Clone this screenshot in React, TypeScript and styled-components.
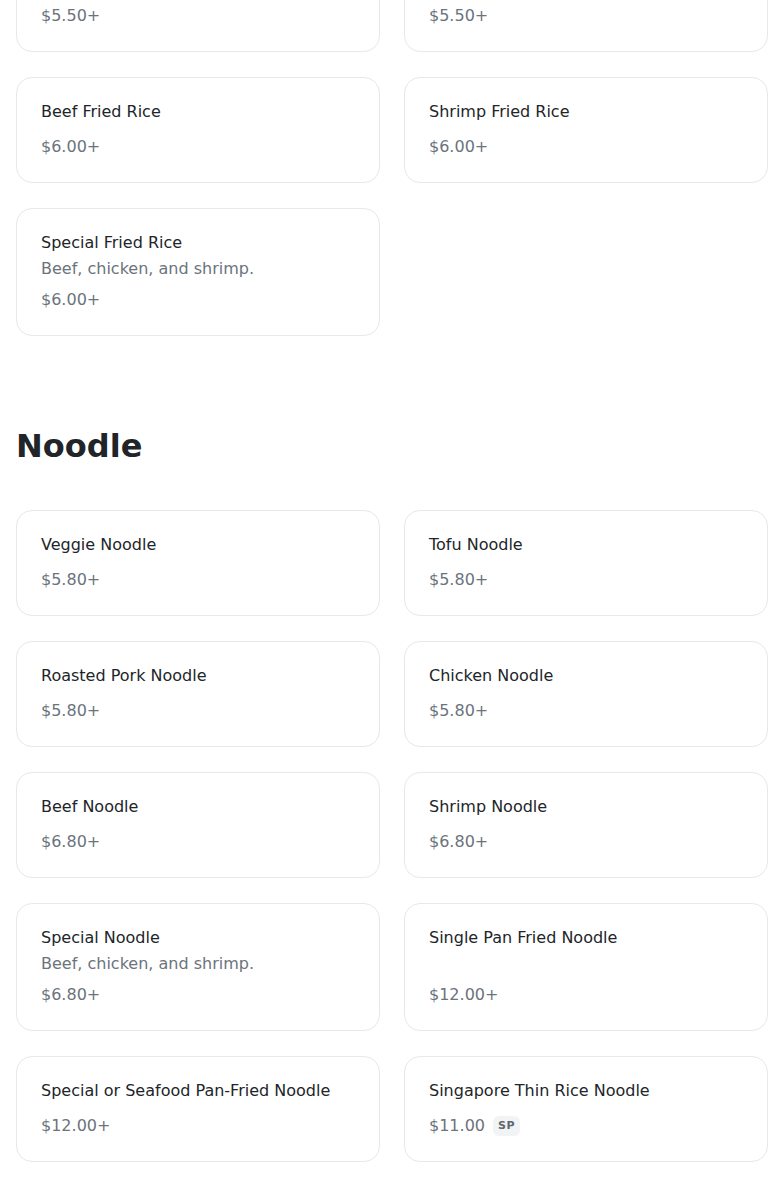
import React from 'react';
import styled, { createGlobalStyle } from 'styled-components';

type Item = {
  name: string;
  price: string;
  description?: string;
  badge?: string;
};

type Section = {
  title?: string;
  items: Item[];
};

const sections: Section[] = [
  {
    items: [
      { name: 'Chicken Fried Rice', price: '$5.50+' },
      { name: 'Roasted Pork Fried Rice', price: '$5.50+' },
      { name: 'Beef Fried Rice', price: '$6.00+' },
      { name: 'Shrimp Fried Rice', price: '$6.00+' },
      {
        name: 'Special Fried Rice',
        description: 'Beef, chicken, and shrimp.',
        price: '$6.00+',
      },
    ],
  },
  {
    title: 'Noodle',
    items: [
      { name: 'Veggie Noodle', price: '$5.80+' },
      { name: 'Tofu Noodle', price: '$5.80+' },
      { name: 'Roasted Pork Noodle', price: '$5.80+' },
      { name: 'Chicken Noodle', price: '$5.80+' },
      { name: 'Beef Noodle', price: '$6.80+' },
      { name: 'Shrimp Noodle', price: '$6.80+' },
      {
        name: 'Special Noodle',
        description: 'Beef, chicken, and shrimp.',
        price: '$6.80+',
      },
      { name: 'Single Pan Fried Noodle', price: '$12.00+' },
      { name: 'Special or Seafood Pan-Fried Noodle', price: '$12.00+' },
      { name: 'Singapore Thin Rice Noodle', price: '$11.00', badge: 'SP' },
    ],
  },
];

export default function App() {
  return (
    <>
      <GlobalStyle />
      <Page>
        {sections.map((section, i) => (
          <MenuSection key={i}>
            {section.title && <SectionTitle>{section.title}</SectionTitle>}
            <Grid>
              {section.items.map((item) => (
                <Card key={item.name}>
                  <Name>{item.name}</Name>
                  {item.description && <Description>{item.description}</Description>}
                  <PriceRow>
                    <Price>{item.price}</Price>
                    {item.badge && <Badge>{item.badge}</Badge>}
                  </PriceRow>
                </Card>
              ))}
            </Grid>
          </MenuSection>
        ))}
      </Page>
    </>
  );
}

const GlobalStyle = createGlobalStyle`
  * {
    box-sizing: border-box;
  }
  html, body {
    margin: 0;
    padding: 0;
    background: #ffffff;
  }
  body {
    font-family: "DejaVu Sans", "Liberation Sans", sans-serif;
    color: #212529;
  }
`;

/* the screenshot is taken part way down the menu */
const Page = styled.main`
  margin-top: -54px;
  padding: 0 16px 60px;
`;

const MenuSection = styled.section`
  & + & {
    margin-top: 90px;
  }
`;

const SectionTitle = styled.h2`
  margin: 0 0 44px;
  font-size: 32px;
  line-height: 40px;
  font-weight: 700;
  color: #212529;
`;

const Grid = styled.div`
  display: grid;
  grid-template-columns: repeat(2, 1fr);
  column-gap: 24px;
  row-gap: 25px;
`;

const Card = styled.div`
  display: flex;
  flex-direction: column;
  min-height: 106px;
  padding: 24px 24px 25px;
  background: #ffffff;
  border: 1px solid #e7e8ea;
  border-radius: 16px;
`;

const Name = styled.div`
  font-size: 16px;
  line-height: 20px;
  color: #212529;
`;

const Description = styled.div`
  margin-top: 6px;
  font-size: 16px;
  line-height: 20px;
  color: #6c737c;
`;

const PriceRow = styled.div`
  display: flex;
  align-items: center;
  margin-top: auto;
  padding-top: 11px;
`;

const Price = styled.span`
  font-size: 16px;
  line-height: 20px;
  color: #6c737c;
`;

const Badge = styled.span`
  margin-left: 8px;
  padding: 2px 5px;
  border-radius: 6px;
  background: #f1f3f5;
  font-size: 11px;
  line-height: 16px;
  font-weight: 700;
  letter-spacing: 0.05em;
  color: #5f6670;
`;
